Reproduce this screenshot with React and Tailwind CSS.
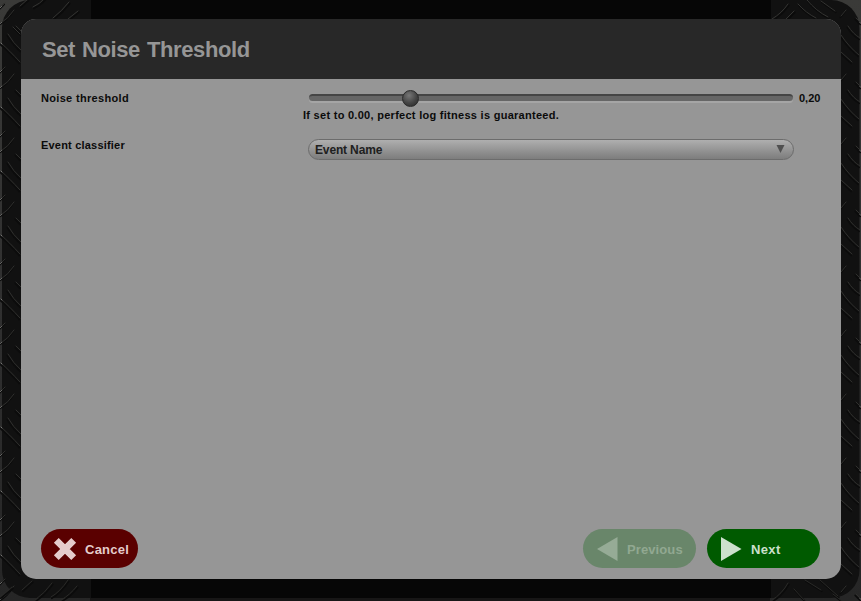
const leftMarks = [
  'M1 43Q9 50 20 62', 'M8 34Q13 43 21 50', 'M16 26L21 31',
  'M1 23Q8 19 14 10', 'M0 8L5 3',
];
const rightMarks = [
  'M841 35Q849 47 859 55', 'M848 26Q853 34 860 38', 'M856 18L861 23',
  'M841 52L852 62', 'M841 16L846 10',
];
const sideMarks = leftMarks.concat(rightMarks);
const topMarks = 'M33 7Q40 4 46 -3M53 18Q62 11 69 2M68 19L78 11M20 6L28 -1M13 27L20 34M772 19Q782 13 788 4M786 19L794 11M798 4Q806 13 816 18M807 0Q816 11 828 17M821 1L835 11';
const bottomMarks = 'M35 600Q45 593 52 583M51 597Q60 592 68 580M61 600Q70 595 77 586M0 597L12 587M22 590L32 581M772 600Q782 594 788 583M805 580L821 590M794 589L804 600M820 580L838 596M833 594L843 602';
const bands = [0, 1, 2, 3, 4, 5, 6, 7, 8, 9];

function Tread() {
  return (
    <svg className="absolute inset-0" width="861" height="601" viewBox="0 0 861 601">
      <defs>
        <linearGradient id="outer" x1="0" y1="0" x2="0" y2="1">
          <stop offset="0" stopColor="#3a3a38" />
          <stop offset="0.5" stopColor="#303030" />
          <stop offset="1" stopColor="#262626" />
        </linearGradient>
      </defs>
      <rect width="861" height="601" fill="url(#outer)" />
      <rect x="90" y="596" width="680" height="5" fill="#171616" />
      <rect x="2" y="0" width="857.5" height="598" rx="28" fill="#111111" />
      <rect x="91" y="0" width="680" height="598" fill="#060606" />
      <g fill="none" strokeLinecap="round">
        {bands.map((b) => (
          <g key={b} transform={`translate(0 ${b * 64})`}>
            {sideMarks.map((d) => (
              <g key={d}>
                <path d={d} stroke="#0c0c0c" strokeWidth="1.6" transform="translate(-0.8 1.4)" />
                <path d={d} stroke="#30302e" strokeWidth="1" />
              </g>
            ))}
            <path d="M0.500 23.500L1.500 22.500M0.500 7.500L1.500 6.500M1 43L2 44M860 22.500L861 23.500" stroke="#777775" strokeWidth="1" />
          </g>
        ))}
        <path d={topMarks} stroke="#0b0b0b" strokeWidth="1.6" transform="translate(0.8 1.4)" />
        <path d={topMarks} stroke="#343432" />
        <path d={bottomMarks} stroke="#0b0b0b" strokeWidth="1.6" transform="translate(0.8 1.4)" />
        <path d={bottomMarks} stroke="#2a2a28" />
      </g>
    </svg>
  );
}

export default function App() {
  return (
    <div className="relative h-[601px] w-[861px] overflow-hidden bg-[#111] p-[19px_20px_22px_21px] font-['Liberation_Sans',Arial,sans-serif] font-bold text-[#0b0b0b]">
      <Tread />
      <main className="relative flex h-[560px] w-[820px] flex-col overflow-hidden rounded-[15px] bg-[#969696]">
        <header className="flex h-[60px] shrink-0 items-center bg-[#282828] pt-[2px] pl-[21px]">
          <h1 className="text-[22px] leading-none tracking-[-0.4px] text-[#969696] [word-spacing:1.3px]">Set Noise Threshold</h1>
        </header>
        <section className="flex flex-1 flex-col px-5 text-[11px] leading-[13px]">
          <div className="flex h-[47px] pt-[13px]">
            <span className="w-[268px] tracking-[0.32px]">Noise threshold</span>
            <div className="w-[490px]">
              <div className="relative mt-[2px] h-[7px] w-[484px] rounded-full border-t-2 border-[#454545] bg-[#666] shadow-[0_2px_0_#a5a5a5]">
                <span className="absolute -top-[6px] left-[93px] size-[17px] rounded-full border border-[#2a2a2a] bg-[radial-gradient(circle_at_40%_30%,#777,#444_55%,#262626)]" />
              </div>
              <p className="-ml-[6px] mt-[8px] tracking-[0.28px]">If set to 0.00, perfect log fitness is guaranteed.</p>
            </div>
            <span>0,20</span>
          </div>
          <div className="flex h-[40px] pt-[13px]">
            <span className="w-[267px] tracking-[0.2px]">Event classifier</span>
            <div className="flex h-[21px] w-[486px] items-center justify-between rounded-full border border-[#6c6c6c] bg-linear-to-b from-[#afafaf] to-[#7d7d7d] pr-2 pl-[6px] text-[12px] text-[#202020]">
              <span className="pt-px tracking-[-0.15px]">Event Name</span>
              <svg className="mb-[2px]" width="9" height="8" viewBox="0 0 9 8"><path d="M0.500 0H8.500L4.500 8Z" fill="#505050" /></svg>
            </div>
          </div>
        </section>
        <footer className="flex h-[50px] shrink-0 pr-[21px] pl-5 text-[13px]">
          <button className="flex h-[39px] w-[97px] items-center rounded-full bg-[#5a0000] pl-[12px] text-[#e5cccc]">
            <svg width="24" height="24" viewBox="0 0 24 24"><path d="M3.300 3.300L20.700 20.700M20.700 3.300L3.300 20.700" stroke="#e5cccc" strokeWidth="6.800" /></svg>
            <span className="ml-2 pt-[2px] tracking-[0.25px]">Cancel</span>
          </button>
          <button className="ml-auto flex h-[39px] w-[113px] items-center rounded-full bg-[#69866a] pl-[14px] text-[#91a891]">
            <svg width="21" height="24" viewBox="0 0 21 24"><path d="M20.500 0V24L0 12Z" fill="#96ab96" /></svg>
            <span className="ml-[9px] pt-[2px] tracking-[0.1px]">Previous</span>
          </button>
          <button className="ml-[11px] flex h-[39px] w-[113px] items-center rounded-full bg-[#005a00] pl-[14px] text-[#cce0cc]">
            <svg width="21" height="24" viewBox="0 0 21 24"><path d="M0 0V24L20.500 12Z" fill="#cce0cc" /></svg>
            <span className="ml-[9px] pt-[2px] tracking-[0.35px]">Next</span>
          </button>
        </footer>
      </main>
    </div>
  );
}
